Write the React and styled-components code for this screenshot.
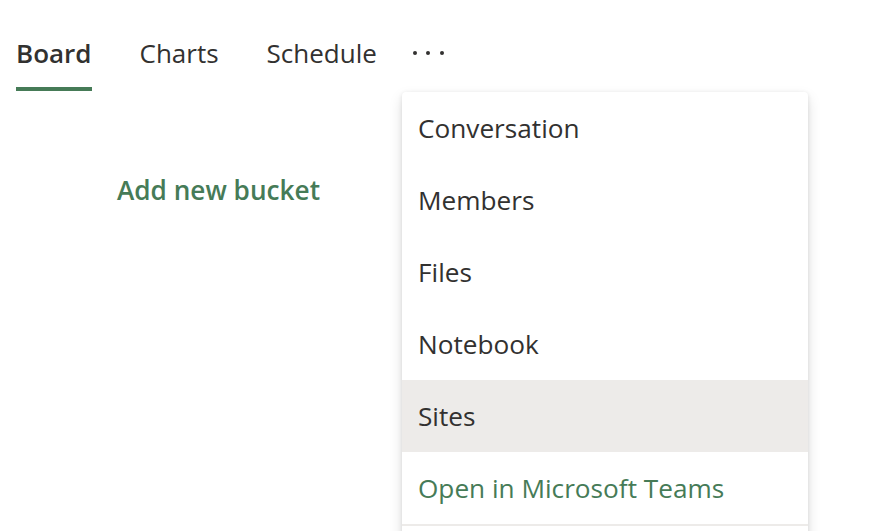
import React from "react";
import styled, { createGlobalStyle } from "styled-components";

const GlobalStyle = createGlobalStyle`
  html, body {
    margin: 0;
    padding: 0;
    background: #ffffff;
  }
  body {
    font-family: "Open Sans", "Noto Sans", sans-serif;
    color: #323130;
    -webkit-font-smoothing: antialiased;
  }
`;

const GREEN = "#467b57";

const Page = styled.div`
  position: relative;
  width: 883px;
  height: 531px;
  overflow: hidden;
`;

const TabBar = styled.nav`
  display: flex;
  align-items: flex-start;
  padding-top: 33px;
`;

const Tab = styled.div`
  display: flex;
  flex-direction: column;
  align-items: stretch;
  padding: 0 16px;
  margin-right: 16px;
  cursor: pointer;
`;

const TabLabel = styled.span`
  font-size: 26px;
  line-height: 40px;
  font-weight: ${(p) => (p.$active ? 600 : 400)};
  color: #323130;
  white-space: nowrap;
`;

const TabUnderline = styled.span`
  margin-top: 14px;
  height: 4px;
  background: ${(p) => (p.$active ? GREEN : "transparent")};
`;

const MoreButton = styled.div`
  display: flex;
  align-items: center;
  gap: 9.5px;
  height: 40px;
  padding: 0 2px 0 4px;
  cursor: pointer;
`;

const Dot = styled.span`
  width: 4px;
  height: 4px;
  border-radius: 50%;
  background: #323130;
`;

const Content = styled.div`
  padding-left: 117px;
  margin-top: 79px;
`;

const AddBucket = styled.div`
  font-size: 26.2px;
  line-height: 40px;
  font-weight: 600;
  color: ${GREEN};
  cursor: pointer;
`;

const Menu = styled.ul`
  position: absolute;
  left: 402px;
  top: 92px;
  width: 406px;
  margin: 0;
  padding: 0;
  list-style: none;
  background: #ffffff;
  border-radius: 4px;
  box-shadow: 0 6px 14px rgba(0, 0, 0, 0.13), 0 1px 4px rgba(0, 0, 0, 0.1);
`;

const MenuItem = styled.li`
  display: flex;
  align-items: center;
  height: 72px;
  padding: 0 16px;
  font-size: 26.2px;
  color: ${(p) => (p.$accent ? GREEN : "#323130")};
  background: ${(p) => (p.$hover ? "#edebe9" : "transparent")};
  white-space: nowrap;
  cursor: pointer;
`;

const MenuDivider = styled.li`
  height: 2px;
  background: #edebe9;
`;

const tabs = [
  { label: "Board", active: true },
  { label: "Charts" },
  { label: "Schedule" },
];

const items = [
  { label: "Conversation" },
  { label: "Members" },
  { label: "Files" },
  { label: "Notebook" },
  { label: "Sites", hover: true },
  { label: "Open in Microsoft Teams", accent: true },
];

export default function App() {
  return (
    <Page>
      <GlobalStyle />
      <TabBar>
        {tabs.map((t) => (
          <Tab key={t.label}>
            <TabLabel $active={t.active}>{t.label}</TabLabel>
            <TabUnderline $active={t.active} />
          </Tab>
        ))}
        <MoreButton aria-label="More">
          <Dot />
          <Dot />
          <Dot />
        </MoreButton>
      </TabBar>
      <Content>
        <AddBucket>Add new bucket</AddBucket>
      </Content>
      <Menu>
        {items.map((it) => (
          <MenuItem key={it.label} $hover={it.hover} $accent={it.accent}>
            {it.label}
          </MenuItem>
        ))}
        <MenuDivider />
        <MenuItem />
      </Menu>
    </Page>
  );
}
